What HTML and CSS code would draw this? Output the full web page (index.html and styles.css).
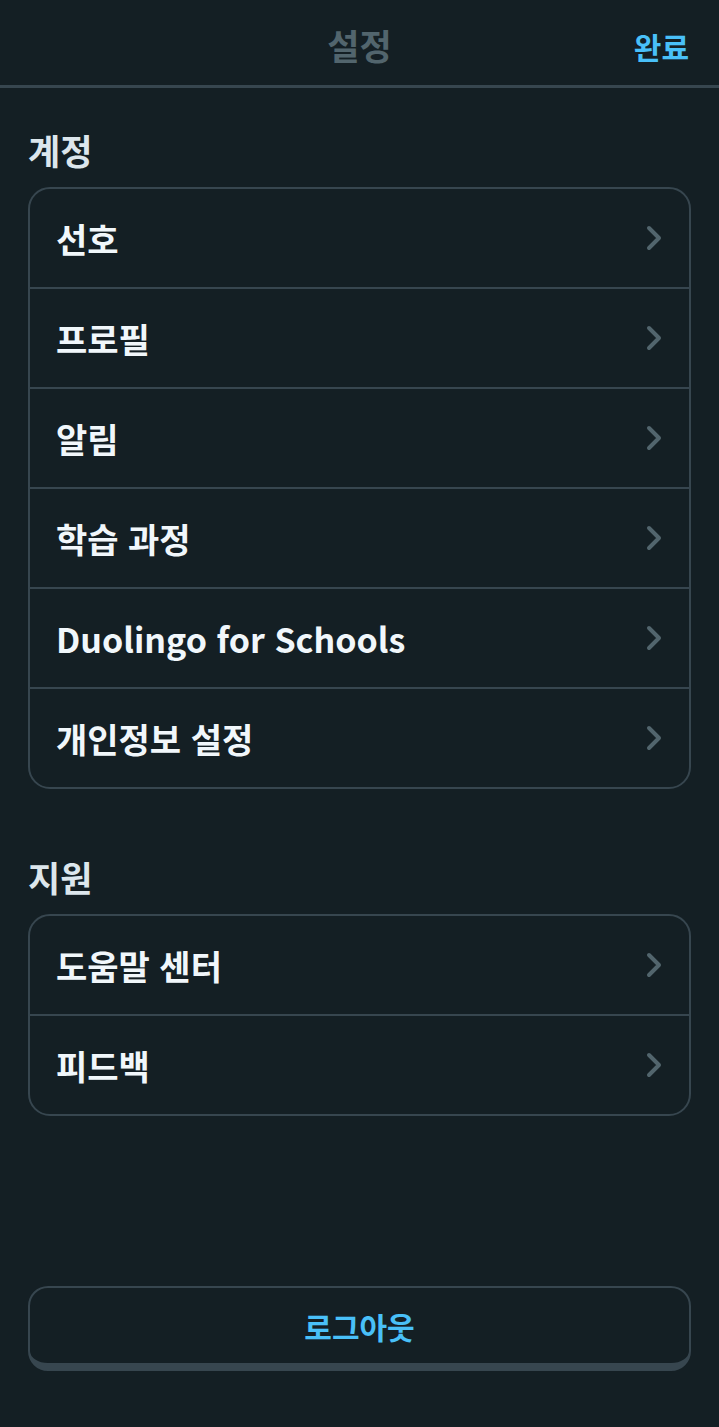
FILE: index.html
```html
<!DOCTYPE html>
<html lang="ko">
<head>
    <meta charset="UTF-8">
    <meta name="viewport" content="width=device-width, initial-scale=1.0">
    <title>설정</title>
    <link rel="stylesheet" href="styles.css">
</head>
<body>
    <div id="page-container">
        <div class="top-bar">
            <span class="top-bar-title">설정</span>
            <a class="top-bar-done" href="#">완료</a>
        </div>

        <div class="settings-body">
            <h2 class="section-title">계정</h2>
            <ul class="settings-card">
                <li class="settings-row"><span>선호</span><svg class="chevron" viewBox="0 0 18 28"><polyline points="4,4 14,14 4,24"/></svg></li>
                <li class="settings-row"><span>프로필</span><svg class="chevron" viewBox="0 0 18 28"><polyline points="4,4 14,14 4,24"/></svg></li>
                <li class="settings-row"><span>알림</span><svg class="chevron" viewBox="0 0 18 28"><polyline points="4,4 14,14 4,24"/></svg></li>
                <li class="settings-row"><span>학습 과정</span><svg class="chevron" viewBox="0 0 18 28"><polyline points="4,4 14,14 4,24"/></svg></li>
                <li class="settings-row"><span>Duolingo for Schools</span><svg class="chevron" viewBox="0 0 18 28"><polyline points="4,4 14,14 4,24"/></svg></li>
                <li class="settings-row"><span>개인정보 설정</span><svg class="chevron" viewBox="0 0 18 28"><polyline points="4,4 14,14 4,24"/></svg></li>
            </ul>

            <h2 class="section-title second">지원</h2>
            <ul class="settings-card">
                <li class="settings-row"><span>도움말 센터</span><svg class="chevron" viewBox="0 0 18 28"><polyline points="4,4 14,14 4,24"/></svg></li>
                <li class="settings-row"><span>피드백</span><svg class="chevron" viewBox="0 0 18 28"><polyline points="4,4 14,14 4,24"/></svg></li>
            </ul>

            <button class="logout-button">로그아웃</button>
        </div>
    </div>
</body>
</html>
```

FILE: styles.css
```css
body {
    font-family: 'Noto Sans CJK KR', 'Noto Sans', sans-serif;
    margin: 0;
    background-color: #141f24;
    color: #f1f7fb;
}
#page-container {
    min-height: 1427px;
}
.top-bar {
    position: relative;
    height: 88px;
    display: flex;
    align-items: center;
    justify-content: center;
    border-bottom: 3px solid #37464f;
    box-sizing: border-box;
}
.top-bar-title {
    font-size: 35px;
    line-height: 40px;
    font-weight: 700;
    color: #52656d;
    margin-top: 5px;
}
.top-bar-done {
    position: absolute;
    right: 30px;
    top: 26px;
    font-size: 30px;
    line-height: 40px;
    font-weight: 700;
    color: #49c0f8;
    text-decoration: none;
}
.settings-body {
    padding: 0 28px;
    display: flex;
    flex-direction: column;
}
.section-title {
    margin: 42px 0 17px 0;
    font-size: 35px;
    line-height: 40px;
    font-weight: 700;
    color: #dce6ec;
}
.section-title.second {
    margin-top: 68px;
}
.settings-card {
    list-style: none;
    margin: 0;
    padding: 0;
    border: 2px solid #37464f;
    border-radius: 22px;
}
.settings-row {
    height: 98px;
    display: flex;
    align-items: center;
    justify-content: space-between;
    padding: 0 26px 0 26px;
    font-size: 34px;
    font-weight: 700;
    border-top: 2px solid #37464f;
}
.settings-row:first-child {
    border-top: none;
}
.chevron {
    width: 18px;
    height: 28px;
    fill: none;
    stroke: #52656d;
    stroke-width: 4;
    stroke-linecap: round;
    stroke-linejoin: round;
}
.logout-button {
    margin-top: 170px;
    height: 85px;
    background-color: #141f24;
    border: 2px solid #37464f;
    border-bottom-width: 8px;
    border-radius: 20px;
    font-family: inherit;
    font-size: 30px;
    font-weight: 700;
    color: #49c0f8;
    cursor: pointer;
}
```
